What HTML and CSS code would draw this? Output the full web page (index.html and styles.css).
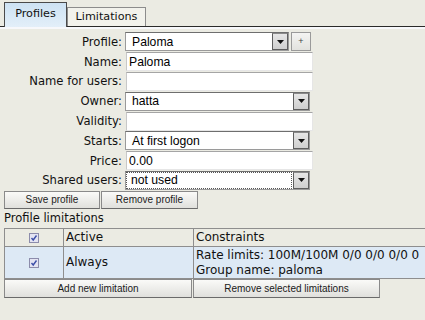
FILE: index.html
```html
<!DOCTYPE html>
<html>
<head>
<meta charset="utf-8">
<link rel="stylesheet" href="styles.css">
</head>
<body>
<div class="tabs">
  <div class="tab active">Profiles</div>
  <div class="tab">Limitations</div>
</div>
<div class="form">
  <div class="row">
    <label class="lbl">Profile:</label>
    <div class="select short"><span class="val">Paloma</span><span class="drop"><svg width="7" height="4" viewBox="0 0 7 4"><path d="M0 0H7L3.5 4Z" fill="#111"/></svg></span></div>
    <div class="plus">+</div>
  </div>
  <div class="row">
    <label class="lbl">Name:</label>
    <div class="input"><span class="val">Paloma</span></div>
  </div>
  <div class="row">
    <label class="lbl">Name for users:</label>
    <div class="input"></div>
  </div>
  <div class="row">
    <label class="lbl">Owner:</label>
    <div class="select"><span class="val">hatta</span><span class="drop"><svg width="7" height="4" viewBox="0 0 7 4"><path d="M0 0H7L3.5 4Z" fill="#111"/></svg></span></div>
  </div>
  <div class="row">
    <label class="lbl">Validity:</label>
    <div class="input"></div>
  </div>
  <div class="row">
    <label class="lbl">Starts:</label>
    <div class="select"><span class="val">At first logon</span><span class="drop"><svg width="7" height="4" viewBox="0 0 7 4"><path d="M0 0H7L3.5 4Z" fill="#111"/></svg></span></div>
  </div>
  <div class="row">
    <label class="lbl">Price:</label>
    <div class="input"><span class="val">0.00</span></div>
  </div>
  <div class="row">
    <label class="lbl">Shared users:</label>
    <div class="select focus"><span class="val dotted">not used</span><span class="drop"><svg width="7" height="4" viewBox="0 0 7 4"><path d="M0 0H7L3.5 4Z" fill="#111"/></svg></span></div>
  </div>
</div>
<div class="btnrow">
  <div class="btn save">Save profile</div>
  <div class="btn remove">Remove profile</div>
</div>
<div class="section">Profile limitations</div>
<table class="limits">
  <colgroup><col class="c1"><col class="c2"><col class="c3"></colgroup>
  <tr class="head">
    <td class="chk"><svg width="10" height="10" viewBox="0 0 10 10"><rect x="0.5" y="0.5" width="9" height="9" fill="#e4e4f2" stroke="#8c8cab"/><path d="M2.5 5 L4.2 7 L7.5 2.5" fill="none" stroke="#3d4fa8" stroke-width="1.4"/></svg></td>
    <td>Active</td>
    <td class="last">Constraints</td>
  </tr>
  <tr class="data">
    <td class="chk"><svg width="10" height="10" viewBox="0 0 10 10"><rect x="0.5" y="0.5" width="9" height="9" fill="#e4e4f2" stroke="#8c8cab"/><path d="M2.5 5 L4.2 7 L7.5 2.5" fill="none" stroke="#3d4fa8" stroke-width="1.4"/></svg></td>
    <td>Always</td>
    <td class="last">Rate limits: 100M/100M 0/0 0/0 0/0 0<br>Group name: paloma</td>
  </tr>
</table>
<div class="btnrow2">
  <div class="btn add">Add new limitation</div>
  <div class="btn rmsel">Remove selected limitations</div>
</div>
</body>
</html>
```

FILE: styles.css
```css
html, body {
  margin: 0;
  padding: 0;
  background: #ebebe3;
  overflow: hidden;
  width: 425px;
  height: 320px;
  font-family: "DejaVu Sans", Verdana, sans-serif;
  color: #111;
}
.tabs {
  display: flex;
  align-items: flex-end;
  height: 26px;
  padding-left: 4px;
  border-bottom: 1px solid #2a2a2a;
  box-shadow: 0 2px 0 #f7f8fb;
}
.tab {
  font-size: 11.2px;
  box-sizing: border-box;
  border: 1px solid #8c8c8c;
  border-bottom: none;
  background: #f2f2ec;
  height: 19px;
  width: 79px;
  text-align: center;
  line-height: 17px;
}
.tab.active {
  width: 63px;
  height: 25px;
  line-height: 22px;
  margin-bottom: -1px;
  border-color: #4a4a4a;
  background: linear-gradient(#cde2f3, #e3eff9);
}
.form {
  padding-top: 5px;
}
.row {
  display: flex;
  align-items: center;
  height: 19.8px;
}
.lbl {
  width: 122px;
  text-align: right;
  font-size: 11.6px;
  margin-right: 3px;
  color: #111;
}
.val {
  font-family: "Liberation Sans", Arial, sans-serif;
  font-size: 12.2px;
  color: #000;
}
.select {
  box-sizing: border-box;
  width: 185px;
  height: 19px;
  background: #fff;
  border: 1px solid #9a9a9a;
  border-top-color: #6e6e6e;
  display: flex;
  align-items: center;
  justify-content: space-between;
  padding-left: 6px;
}
.select.short {
  width: 164px;
}
.drop {
  box-sizing: border-box;
  width: 16px;
  height: 17px;
  border: 1px solid #5e5e5e;
  border-top-color: #8a8a8a;
  background: linear-gradient(#e6e6e6, #cfcfcf);
  display: flex;
  align-items: center;
  justify-content: center;
}
.select.focus {
  padding-left: 0;
}
.select.focus .dotted {
  flex: 1;
  height: 15px;
  line-height: 15px;
  border: 1px dotted #555;
  padding-left: 4px;
  margin-right: 1px;
}
.plus {
  box-sizing: border-box;
  width: 20px;
  height: 19px;
  margin-left: 2px;
  border: 1px solid #9a9a9a;
  background: linear-gradient(#f4f4f2, #e2e2de);
  font-family: "Liberation Sans", Arial, sans-serif;
  font-size: 9px;
  color: #444;
  text-align: center;
  line-height: 16px;
}
.input {
  box-sizing: border-box;
  width: 187px;
  height: 19px;
  margin-left: 1px;
  background: #fff;
  border: 1px solid #e6e6e6;
  border-top-color: #a5a5a5;
  border-left-color: #c8c8c8;
  padding-left: 2px;
  display: flex;
  align-items: center;
}
.btnrow {
  display: flex;
  gap: 1px;
  padding-left: 4px;
  margin-top: 1px;
}
.btn {
  box-sizing: border-box;
  height: 18px;
  border: 1px solid #8a8a8a;
  border-bottom-color: #6a6a6a;
  background: linear-gradient(#fafaf8, #e0e0dc);
  font-family: "Liberation Sans", Arial, sans-serif;
  font-size: 10px;
  color: #1a1a1a;
  text-align: center;
  line-height: 16px;
}
.save { width: 96px; }
.remove { width: 97px; }
.section {
  font-size: 11.5px;
  padding-left: 4px;
  margin-top: 2px;
  height: 17px;
  line-height: 15px;
}
.limits {
  margin-left: 4px;
  width: 421px;
  border-collapse: collapse;
  table-layout: fixed;
  font-size: 12px;
}
.c1 { width: 59px; }
.c2 { width: 130px; }
.limits td {
  border: 1px solid #8e8e8e;
  padding: 0 2px;
  vertical-align: middle;
  white-space: nowrap;
  overflow: hidden;
  line-height: 15px;
}
.limits td.last {
  border-right: none;
}
.limits tr.head td {
  height: 17px;
  background: #ebebe3;
}
.limits tr.data td {
  height: 31px;
  background: #dde9f5;
}
.limits td.chk {
  text-align: center;
  padding: 0;
}
.limits td.chk svg {
  display: inline-block;
  vertical-align: middle;
}
.btnrow2 {
  display: flex;
  gap: 1px;
  padding-left: 4px;
}
.btnrow2 .btn {
  height: 19px;
  line-height: 17px;
}
.add { width: 188px; }
.rmsel { width: 187px; }
```
